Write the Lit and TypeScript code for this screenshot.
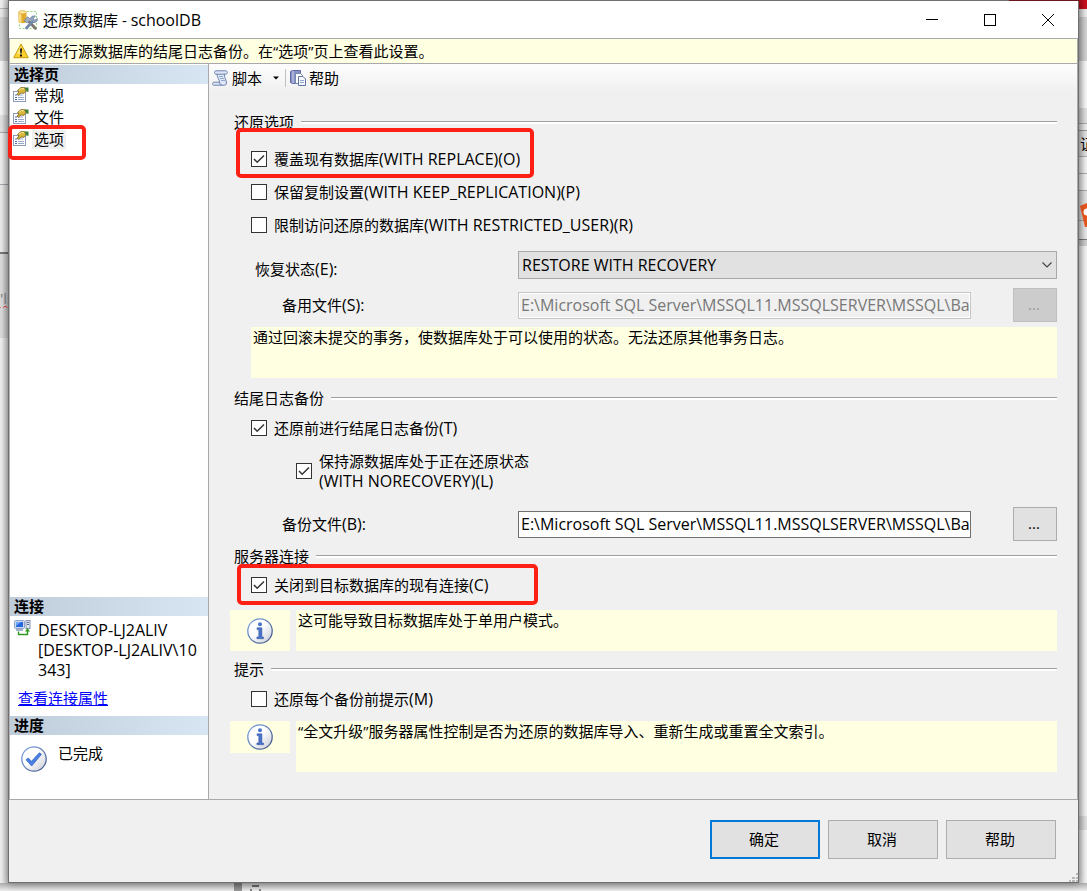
import { LitElement, html, svg, css } from "lit";
import { customElement, property } from "lit/decorators.js";

const databaseIcon = html`<svg width="20" height="20" viewBox="0 0 20 20" aria-hidden="true">
  <path d="M9 1.500h9.500v17H1.500V12" fill="none" stroke="#8fdc7c" stroke-dasharray="2 1.500" />
  <path d="M.5 2.500v9c0 2.200 8 2.200 8 0v-9z" fill="#e3ab2c" />
  <path d="M1 3v8.500c.5 1 1.500 1.300 2.500 1.400V3z" fill="#f7dc83" />
  <ellipse cx="4.500" cy="2.300" rx="4" ry="1.700" fill="#fbe7a0" stroke="#d79b22" stroke-width=".6" />
  <path d="M10 10.500l7.500 8" stroke="#7d746c" stroke-width="2.600" stroke-linecap="round" />
  <path d="M15 11L8.500 18" stroke="#7189a8" stroke-width="2.800" stroke-linecap="round" />
  <path d="M12.500 8c1-2 3.500-2.500 5-2l-2.200 2.400 1.500 1.700 2.700-1.500c.3 2.700-1.700 4.400-4.500 4z" fill="#8ea4bf" stroke="#5d7594" stroke-width=".6" />
  <path d="M6 10.800l3.500-4 3.500 2.800-3.700 3.200z" fill="#a3b1c2" stroke="#61748c" stroke-width=".7" />
</svg>`;

const warningIcon = html`<svg width="16" height="16" viewBox="0 0 16 16" aria-hidden="true">
  <path d="M8 1L15.300 14.700H.7z" fill="#fcd02c" stroke="#c99a12" stroke-linejoin="round" />
  <path d="M8 2.800L3.500 11h5z" fill="#fff0a0" opacity=".7" />
  <path d="M7 5.500h2l-.4 5H7.400z" fill="#111" /><rect x="7" y="11.500" width="2" height="2" fill="#111" />
</svg>`;

const pageIcon = html`<svg width="16" height="16" viewBox="0 0 16 16" aria-hidden="true">
  <rect x=".5" y="4.500" width="12" height="10" fill="#fdfdff" stroke="#8d9bb8" />
  <path d="M2 8h2M2 10.500h2M2 12.500h2" stroke="#4e6db0" />
  <path d="M5 8h5M5 10.500h6M5 12.500h6" stroke="#9aa9c7" />
  <path d="M4.500 3.500L8 .5l4 .3 1.500 2.500-2.500 3-3-.3-2.500 2.200-1.500-.8 2-2.600z" fill="#d9b63c" stroke="#77601a" stroke-width=".8" />
  <path d="M6 3.300l2.500-1.800 2.500.3" fill="none" stroke="#fbeb9a" />
  <path d="M11.500.5h4V5l-2.500-.8z" fill="#3f7d3a" />
</svg>`;

const scriptIcon = html`<svg width="17" height="16" viewBox="0 0 17 16" aria-hidden="true">
  <path d="M4 .8h9.500c2.500 0 2.500 3.400 0 3.400h-1.200c0 3.500 2.200 6 2.200 8.800 0 1.500-1 2.200-2.200 2.200H2c-2 0-2-3 0-3h5.500C7.500 9.500 5 7.500 5 4.200H4C2 4.200 2 .8 4 .8z" fill="#dfe7f6" stroke="#6c83ad" />
  <path d="M5 4.200h8M7.500 12.200c0 1.500.8 2.600 2.300 2.800" fill="none" stroke="#6c83ad" />
  <path d="M7 6.500h4M8 8.500h4M9 10.500h4" stroke="#94a9cf" />
</svg>`;

const helpIcon = html`<svg width="16" height="16" viewBox="0 0 16 16" aria-hidden="true">
  <path d="M.5 1.500l2-1h8v13h-8l-2-1z" fill="#8791c4" stroke="#5f69a5" />
  <path d="M3 1v12" stroke="#c9cfee" />
  <path d="M5.500 3.500h5l2 2v8h-7z" fill="#fff" stroke="#7788ae" />
  <path d="M8.500 6.500h4.500l2.500 2.500v6.500h-7z" fill="#f5f8ff" stroke="#60749f" />
  <path d="M10 10.500h4M10 12.500h4" stroke="#93a5cc" />
</svg>`;

const serverIcon = html`<svg width="17" height="17" viewBox="0 0 17 17" aria-hidden="true">
  <rect x=".5" y=".5" width="10" height="8" rx="1" fill="#cdd9ee" stroke="#8ea2c9" />
  <rect x="2" y="2" width="7" height="5" fill="#2368e0" /><path d="M2 2h5l-5 4z" fill="#6fa5f7" />
  <path d="M2 10h7" stroke="#8899b8" stroke-width="1.500" />
  <rect x="12" y=".5" width="4" height="8" fill="#dfe6f2" stroke="#8596b5" />
  <path d="M13 2.500h2M13 4.500h2" stroke="#5d6f93" />
  <path d="M4.500 11.500v3h9V10" fill="none" stroke="#2d9a1f" stroke-width="1.400" />
  <path d="M11 11.500L13.500 8l2.500 3.500z" fill="#2d9a1f" />
</svg>`;

const badge = (mark: unknown) => html`<svg width="26" height="26" viewBox="0 0 26 26" aria-hidden="true">
  <defs>
    <linearGradient id="face" x1="0" y1="0" x2="1" y2="1">
      <stop offset="0.450" stop-color="#fff" /><stop offset="1" stop-color="#c4c8d2" />
    </linearGradient>
    <linearGradient id="rim" x1="0" y1="0" x2="1" y2="1">
      <stop offset="0" stop-color="#86a8e6" /><stop offset="1" stop-color="#3f5688" />
    </linearGradient>
  </defs>
  <circle cx="13" cy="13" r="12.200" fill="url(#face)" stroke="url(#rim)" stroke-width="1.300" />
  ${mark}
</svg>`;

const doneIcon = badge(
  svg`<path d="M5 13.800l2.300-1.800 3.200 3.300 7.800-8.500 2.200 1.500L10.700 20z" fill="#4b80e6" stroke="#2f5cb4" stroke-width=".7" />`,
);
const infoIcon = badge(
  svg`<circle cx="13" cy="6.300" r="2" fill="#4a74cc" /><path d="M10 9.800h4.900v9.200h1.600v1.700H9.900V19h1.900v-7.400H10z" fill="#4a74cc" stroke="#2d4f9c" stroke-width=".5" />`,
);

const shared = css`
  * {
    box-sizing: border-box;
  }
  svg {
    display: block;
    flex: none;
  }
  .latin {
    font-size: 16px;
  }
`;

@customElement("check-option")
class CheckOption extends LitElement {
  @property() label = "";
  @property() detail = "";
  @property({ type: Boolean }) checked = false;

  static styles = [
    shared,
    css`
      :host {
        display: block;
        padding-bottom: 1px;
      }
      .row {
        display: flex;
        align-items: center;
        gap: 7px;
        height: var(--row, 32px);
        width: fit-content;
        white-space: pre-line;
      }
      .box {
        appearance: none;
        flex: none;
        width: 16px;
        height: 16px;
        margin: 0;
        border: 1px solid #333;
        background: #fff;
      }
      .box:checked {
        background: #fff
          url("data:image/svg+xml,%3Csvg xmlns='http://www.w3.org/2000/svg' viewBox='0 0 14 14'%3E%3Cpath d='M2 7l3.200 3.300L12 3.500' fill='none' stroke='%23333' stroke-width='1.500'/%3E%3C/svg%3E");
      }
    `,
  ];

  render() {
    return html`<label class="row"
      ><input class="box" type="checkbox" .checked=${this.checked} /><span
        >${this.label}<span class="latin">${this.detail}</span></span
      ></label
    >`;
  }
}

@customElement("option-group")
class OptionGroup extends LitElement {
  @property() heading = "";

  static styles = [
    shared,
    css`
      :host {
        display: block;
      }
      .head {
        display: flex;
        align-items: center;
        gap: 7px;
        height: 20px;
      }
      .head::after {
        content: "";
        flex: 1;
        height: 2px;
        border-top: 1px solid #a0a0a0;
        background: #fff;
      }
    `,
  ];

  render() {
    return html`<section>
      <div class="head">${this.heading}</div>
      <slot></slot>
    </section>`;
  }
}

@customElement("app-root")
class AppRoot extends LitElement {
  static styles = [
    shared,
    css`
      :host {
        display: block;
        font: 15px/20px "Open Sans", "Noto Sans CJK SC", sans-serif;
        color: #000;
      }
      .desktop {
        display: grid;
        grid-template: 1fr 8px / 8px minmax(0, 1fr) 8px;
        min-height: 100vh;
        background: #e4e4e4;
      }
      .edge {
        overflow: hidden;
        position: relative;
      }
      .edge-left {
        background:
          linear-gradient(90deg, #0000 20%, #0003),
          linear-gradient(
            #eee 0 8px, #b8b8bc 8px 9px, #e6e6e6 9px 17px, #cfcfcf 17px 61px, #f4f4f4 61px 115px,
            #e0e0e0 115px 132px, #a8a8b0 132px 133px, #ececec 133px 184px, #a8a8b0 184px 185px,
            #e8e8e8 185px 252px, #777 252px 254px, #dadada 254px 338px, #ececec 338px
          );
      }
      .edge-right {
        background:
          linear-gradient(90deg, #0003, #0000 80%),
          linear-gradient(
            #c80f1e 0 9px, #e8e8e8 9px 17px, #cfcfcf 17px 61px, #f4f4f4 61px 108px, #dcdcdc 108px 123px,
            #aaa 123px 124px, #e8e8e8 124px 130px, #999 130px 131px, #ddd 131px 156px, #aaa 156px 157px,
            #eee 157px 173px, #aaa 173px 174px, #eee 174px 190px, #aaa 190px 191px, #ddd 191px 220px,
            #aaa 220px 221px, #e4e4e4 221px 239px, #777 239px 240px, #ccc 240px 246px, #f0f0f0 246px 816px,
            #dcdcdc 816px 830px, #f0f0f0 830px
          );
      }
      .edge-bottom {
        grid-column: 1 / -1;
        background:
          linear-gradient(#0004, #0000),
          linear-gradient(#777, #777) 252px 2px / 7px 2px no-repeat,
          linear-gradient(#888, #888) 250px 6px / 2px 2px no-repeat,
          linear-gradient(#888, #888) 259px 6px / 2px 2px no-repeat,
          linear-gradient(90deg, #ededed 0 234px, #999 234px 242px, #efefef 242px);
      }
      .under-text {
        position: absolute;
        left: 0;
        top: 288px;
        width: 8px;
        overflow: hidden;
        color: #7d7d86;
        text-decoration: underline wavy #e03030 1px;
      }
      .under-char {
        position: absolute;
        left: 1px;
        top: 134px;
      }
      .under-logo {
        position: absolute;
        left: 1px;
        top: 203px;
      }
      .window {
        position: relative;
        display: flex;
        flex-direction: column;
        border: 1px solid #6f6f6f;
        background: #f0f0f0;
        box-shadow: 0 1px 8px #0005;
        z-index: 1;
      }
      .window::before {
        content: "";
        position: absolute;
        top: -1px;
        right: -1px;
        width: 70px;
        height: 1px;
        background: #6e1620;
      }
      .titlebar {
        display: flex;
        align-items: center;
        gap: 5px;
        height: 37px;
        padding: 0 1px 0 9px;
        background: #fff;
      }
      .title {
        flex: 1;
        margin: 0;
        font: inherit;
      }
      .controls {
        display: flex;
        align-self: stretch;
      }
      .control {
        display: grid;
        place-items: center;
        width: 58px;
        padding: 0;
        border: 0;
        background: none;
      }
      .frame {
        flex: 1;
        display: flex;
        flex-direction: column;
        border: 1px solid #a9a9ad;
        border-left-color: #b4b4b8;
      }
      .banner {
        display: flex;
        align-items: center;
        gap: 4px;
        height: 25px;
        padding-left: 3px;
        border-bottom: 1px solid #a9a9ad;
        background: #ffffe1;
      }
      .panes {
        flex: 1;
        display: grid;
        grid-template-columns: 199px minmax(0, 1fr);
      }
      .side {
        display: flex;
        flex-direction: column;
        padding-top: 1px;
        border-right: 1px solid #a9a9ad;
        background: #fff;
      }
      .side-head {
        height: 19px;
        margin: 0;
        padding-left: 4px;
        font: bold 15px/19px "Open Sans", "Noto Sans CJK SC", sans-serif;
        background: linear-gradient(90deg, #bfccda, #d8e5f2);
      }
      .pages {
        position: relative;
        flex: 1;
        margin: 0;
        padding: 0;
        list-style: none;
      }
      .page {
        display: flex;
        align-items: center;
        gap: 3px;
        width: fit-content;
        height: 22px;
        padding: 0 0 0 3px;
        border: 0;
        background: none;
        font: inherit;
        color: inherit;
      }
      .page-name {
        height: 19px;
        padding: 0 2px;
        line-height: 18px;
      }
      .current {
        background: #f0f0f0;
      }
      .server {
        display: flex;
        gap: 7px;
        height: 72px;
        padding: 4px 4px 0 4px;
      }
      .props {
        align-self: flex-start;
        height: 20px;
        margin: 0 0 8px 8px;
        color: #00f;
      }
      .progress {
        display: flex;
        gap: 11px;
        min-height: 64px;
        padding: 8px 11px;
      }
      .progress svg {
        margin-top: 3px;
      }
      .toolbar {
        display: flex;
        align-items: center;
        gap: 4px;
        height: 28px;
        padding-left: 3px;
        background: linear-gradient(#fdfdfd, #f0f0f0);
      }
      .tool {
        display: flex;
        align-items: center;
        gap: 3px;
        padding: 0;
        border: 0;
        background: none;
        font: inherit;
        color: inherit;
      }
      .drop {
        margin: 0 2px 0 8px;
      }
      .sep {
        width: 1px;
        height: 18px;
        background: #c0c0c0;
      }
      .form {
        padding: 20px 20px 27px 25px;
      }
      .marked {
        position: relative;
      }
      .mark {
        position: absolute;
        border: 4px solid #ff2015;
        border-radius: 5px;
        pointer-events: none;
      }
      .mark-page {
        left: -2px;
        top: 41px;
        width: 78px;
        height: 35px;
      }
      .mark-replace {
        left: -15px;
        top: -15px;
        width: 298px;
        height: 50px;
      }
      .mark-close {
        left: -14px;
        top: -5px;
        width: 301px;
        height: 41px;
      }
      .checks {
        padding: 4px 0 0 17px;
      }
      .first {
        padding-top: 11px;
      }
      .close {
        padding-top: 3px;
      }
      .nested {
        --row: 40px;
        padding: 6px 0 0 62px;
      }
      .field {
        display: grid;
        grid-template-columns: 284px minmax(0, 1fr) 44px;
        align-items: center;
        margin-top: 9px;
      }
      .state {
        align-items: end;
      }
      .backup {
        margin: 15px 0 5px;
      }
      .label {
        height: 20px;
        padding-left: 48px;
      }
      .state .label {
        padding-left: 21px;
      }
      .select-wrap {
        grid-column: 2 / -1;
        position: relative;
      }
      .select {
        appearance: none;
        display: block;
        width: 100%;
        height: 28px;
        padding: 0 24px 0 3px;
        border: 1px solid #a9a9a9;
        border-radius: 0;
        background: #e1e1e1;
        font: inherit;
        font-size: 16px;
        color: #000;
      }
      .chevron {
        position: absolute;
        right: 5px;
        top: 11px;
        pointer-events: none;
      }
      .path {
        min-width: 0;
        height: 27px;
        margin-right: 42px;
        padding: 0 0 0 2px;
        border: 1px solid #707070;
        border-radius: 0;
        background: #fff;
        font: inherit;
        font-size: 16px;
        color: #000;
      }
      .path:disabled {
        border-color: #c6c6c6;
        background: #f0f0f0;
        box-shadow: inset 0 0 0 1px #fff;
        color: #787878;
      }
      .push {
        height: 39px;
        padding: 0 2px 2px 0;
        border: 1px solid #adadad;
        background: #e1e1e1;
        font: inherit;
        color: #000;
      }
      .browse {
        height: 34px;
      }
      .push:disabled {
        border-color: #bfbfbf;
        background: #ccc;
        color: #9a9a9a;
      }
      .note {
        min-height: 51px;
        margin: 5px 0 10px 17px;
        padding: 0 2px;
        background: #ffffe1;
      }
      .info {
        display: grid;
        grid-template-columns: 60px minmax(0, 1fr);
        align-items: start;
        gap: 6px;
        margin: 5px 0 0 -4px;
      }
      .info .note {
        margin: 0;
      }
      .single {
        margin: 8px 0 8px -4px;
      }
      .single .note {
        min-height: 41px;
      }
      .info-cell {
        display: grid;
        place-items: center;
        height: 32px;
        background: #ffffe1;
      }
      .single .info-cell {
        height: 41px;
      }
      .footer {
        display: flex;
        justify-content: flex-end;
        gap: 8px;
        padding: 20px 22px 23px;
      }
      .footer .push {
        width: 110px;
      }
      .footer .default {
        border: 2px solid #0078d7;
      }
      .grip {
        position: absolute;
        right: 0;
        bottom: 0;
      }
    `,
  ];

  private readonly path = "E:\\Microsoft SQL Server\\MSSQL11.MSSQLSERVER\\MSSQL\\Ba";

  render() {
    return html`
      <div class="desktop">
        <div class="edge edge-left"><span class="under-text">'ls</span></div>
        <main class="window">
          <header class="titlebar">
            ${databaseIcon}
            <h1 class="title">还原数据库 - <span class="latin">schoolDB</span></h1>
            <div class="controls">
              <button class="control" aria-label="最小化">
                <svg width="12" height="12"><path d="M0 5.500h12" stroke="#000" /></svg>
              </button>
              <button class="control" aria-label="最大化">
                <svg width="12" height="12"><rect x=".5" y=".5" width="11" height="11" fill="none" stroke="#000" /></svg>
              </button>
              <button class="control" aria-label="关闭">
                <svg width="12" height="12"><path d="M0 0l12 12M12 0L0 12" stroke="#000" /></svg>
              </button>
            </div>
          </header>
          <div class="frame">
            <div class="banner">${warningIcon}<span>将进行源数据库的结尾日志备份。在“选项”页上查看此设置。</span></div>
            <div class="panes">
              <aside class="side">
                <h2 class="side-head">选择页</h2>
                <ul class="pages">
                  ${["常规", "文件", "选项"].map(
                    (name) => html`<li>
                      <button class="page">
                        ${pageIcon}<span class="page-name ${name === "选项" ? "current" : ""}">${name}</span>
                      </button>
                    </li>`,
                  )}
                  <li class="mark mark-page" aria-hidden="true"></li>
                </ul>
                <h2 class="side-head">连接</h2>
                <div class="server">
                  ${serverIcon}<span class="latin">DESKTOP-LJ2ALIV<br />[DESKTOP-LJ2ALIV\\10<br />343]</span>
                </div>
                <a class="props" href="#">查看连接属性</a>
                <h2 class="side-head">进度</h2>
                <div class="progress">${doneIcon}<span>已完成</span></div>
              </aside>
              <div>
                <nav class="toolbar">
                  <button class="tool">
                    ${scriptIcon}<span>脚本</span>
                    <svg class="drop" width="6" height="4"><path d="M0 .5h6L3 3.500z" /></svg>
                  </button>
                  <span class="sep"></span>
                  <button class="tool">${helpIcon}<span>帮助</span></button>
                </nav>
                <form class="form" @submit=${(e: Event) => e.preventDefault()}>
                  <option-group heading="还原选项">
                    <div class="checks first">
                      <div class="marked">
                        <check-option checked label="覆盖现有数据库" detail="(WITH REPLACE)(O)"></check-option>
                        <span class="mark mark-replace"></span>
                      </div>
                      <check-option label="保留复制设置" detail="(WITH KEEP_REPLICATION)(P)"></check-option>
                      <check-option label="限制访问还原的数据库" detail="(WITH RESTRICTED_USER)(R)"></check-option>
                    </div>
                    <div class="field state">
                      <label class="label" for="state">恢复状态<span class="latin">(E):</span></label>
                      <div class="select-wrap">
                        <select class="select" id="state">
                          <option>RESTORE WITH RECOVERY</option>
                        </select>
                        <svg class="chevron" width="10" height="6">
                          <path d="M.5.5L5 5 9.500.5" fill="none" stroke="#444" stroke-width="1.200" />
                        </svg>
                      </div>
                    </div>
                    <div class="field">
                      <label class="label" for="standby">备用文件<span class="latin">(S):</span></label>
                      <input class="path" id="standby" type="text" disabled .value=${this.path} />
                      <button class="push browse" type="button" disabled>...</button>
                    </div>
                    <div class="note">通过回滚未提交的事务，使数据库处于可以使用的状态。无法还原其他事务日志。</div>
                  </option-group>
                  <option-group heading="结尾日志备份">
                    <div class="checks">
                      <check-option checked label="还原前进行结尾日志备份" detail="(T)"></check-option>
                    </div>
                    <div class="nested">
                      <check-option
                        checked
                        .label=${"保持源数据库处于正在还原状态\n"}
                        detail="(WITH NORECOVERY)(L)"
                      ></check-option>
                    </div>
                    <div class="field backup">
                      <label class="label" for="backup">备份文件<span class="latin">(B):</span></label>
                      <input class="path" id="backup" type="text" .value=${this.path} />
                      <button class="push browse" type="button">...</button>
                    </div>
                  </option-group>
                  <option-group heading="服务器连接">
                    <div class="checks close">
                      <div class="marked">
                        <check-option checked label="关闭到目标数据库的现有连接" detail="(C)"></check-option>
                        <span class="mark mark-close"></span>
                      </div>
                    </div>
                    <div class="info single">
                      <div class="info-cell">${infoIcon}</div>
                      <div class="note">这可能导致目标数据库处于单用户模式。</div>
                    </div>
                  </option-group>
                  <option-group heading="提示">
                    <div class="checks">
                      <check-option label="还原每个备份前提示" detail="(M)"></check-option>
                    </div>
                    <div class="info">
                      <div class="info-cell">${infoIcon}</div>
                      <div class="note">“全文升级”服务器属性控制是否为还原的数据库导入、重新生成或重置全文索引。</div>
                    </div>
                  </option-group>
                </form>
              </div>
            </div>
          </div>
          <footer class="footer">
            <button class="push default">确定</button>
            <button class="push">取消</button>
            <button class="push">帮助</button>
          </footer>
          <svg class="grip" width="9" height="9" fill="#b8b8b8" aria-hidden="true">
            <path d="M7 0h2v2H7zM7 4h2v2H7zM3 4h3v2H3zM7 7h2v2H7zM3 7h3v2H3zM0 7h2v2H0z" />
          </svg>
        </main>
        <div class="edge edge-right">
          <span class="under-char">证</span>
          <svg class="under-logo" width="7" height="24" aria-hidden="true">
            <path d="M0 3l7-3v24H5z" fill="#e8541e" /><circle cx="7" cy="9" r="3.500" fill="#fff" />
          </svg>
        </div>
        <div class="edge edge-bottom"></div>
      </div>
    `;
  }
}
